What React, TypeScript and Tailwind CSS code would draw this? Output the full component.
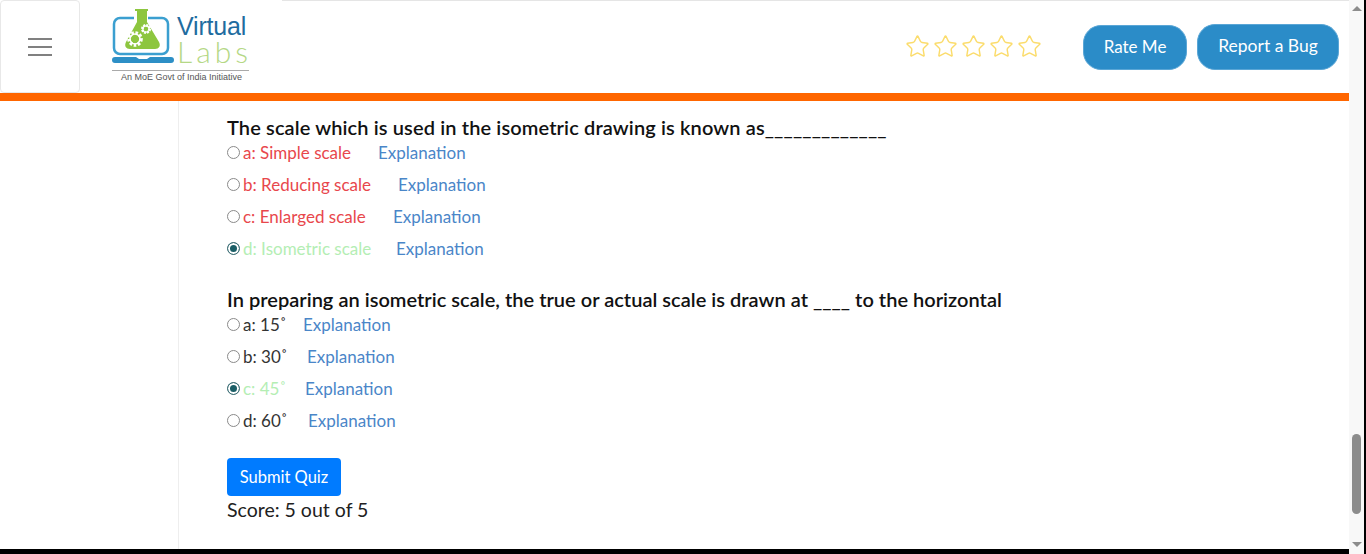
import { Star } from "lucide-react";

const FONT = "font-['Lato','Liberation_Sans',sans-serif]";

const QUESTIONS = [
  {
    title: "The scale which is used in the isometric drawing is known as_____________",
    spacing: "tracking-[0.12px]",
    options: [
      { label: "a: Simple scale", tone: "text-[#e8474c]", width: "w-[111px]", radio: false },
      { label: "b: Reducing scale", tone: "text-[#e8474c]", width: "w-[131px]", radio: false },
      { label: "c: Enlarged scale", tone: "text-[#e8474c]", width: "w-[126px]", radio: false },
      { label: "d: Isometric scale", tone: "text-[#b4eeb4]", width: "w-[129px]", radio: true },
    ],
  },
  {
    title: "In preparing an isometric scale, the true or actual scale is drawn at ____ to the horizontal",
    spacing: "tracking-[0.02px]",
    options: [
      { label: "a: 15˚", tone: "text-[#333333]", width: "w-[36px]", radio: false },
      { label: "b: 30˚", tone: "text-[#333333]", width: "w-[40px]", radio: false },
      { label: "c: 45˚", tone: "text-[#b4eeb4]", width: "w-[38px]", radio: true },
      { label: "d: 60˚", tone: "text-[#333333]", width: "w-[41px]", radio: false },
    ],
  },
];

function Logo() {
  return (
    <div className="relative w-[140px] h-[84px]">
      <svg width="66" height="58" viewBox="0 0 66 58" className="absolute left-0 top-[7px]">
        <path d="M22 10H8a6 6 0 0 0-6 6V40a6 6 0 0 0 6 6H50a6 6 0 0 0 6-6V16a6 6 0 0 0-6-6H36" fill="none" stroke="#3b9fd0" strokeWidth="2.5" />
        <path d="M23 1H36V3H35V14L47 34C49 38 47 41 43 41H18C14 41 12 38 14 34L25 14V3H23z" fill="#8dc63f" />
        <circle cx="23" cy="31" r="6" fill="none" stroke="#fff" strokeWidth="3.6" strokeDasharray="2.4 1.6" />
        <circle cx="23" cy="31" r="5" fill="none" stroke="#fff" strokeWidth="1.6" />
        <circle cx="34" cy="21" r="3.6" fill="none" stroke="#fff" strokeWidth="2.8" strokeDasharray="1.8 1" />
        <circle cx="34" cy="21" r="3.2" fill="none" stroke="#fff" strokeWidth="1.2" />
        <path d="M3 49H24L27 51H35L38 49H59a3 3 0 0 1 0 6H3a3 3 0 0 1 0-6z" fill="#2d8fc6" />
      </svg>
      <span className="absolute left-[65px] top-[14px] text-[25px] leading-[22px] text-[#1f6c9f] font-['Liberation_Sans',sans-serif] tracking-[-0.2px]">Virtual</span>
      <span className="absolute left-[65px] top-[36px] text-[30px] leading-[28px] font-light text-[#b5d886] font-['Lato',sans-serif] tracking-[4px]">Labs</span>
      <div className="absolute left-0 top-[69px] w-[137px] h-px bg-[#aaaaaa]" />
      <span className="absolute left-[9px] top-[71px] text-[9px] leading-[11px] text-[#555555] font-['Liberation_Sans',sans-serif] whitespace-nowrap">An MoE Govt of India Initiative</span>
    </div>
  );
}

function Header() {
  return (
    <header className="h-[93px] flex items-stretch bg-white shrink-0">
      <div className="w-[80px] border border-[#e8e8e8] rounded-[4px] flex flex-col items-center justify-center gap-[6px]">
        <span className="w-[24px] h-[2px] bg-[#808080]" />
        <span className="w-[24px] h-[2px] bg-[#808080]" />
        <span className="w-[24px] h-[2px] bg-[#808080]" />
      </div>
      <div className="w-[202px] pl-[32px] pt-[1px]">
        <Logo />
      </div>
      <div className="flex-1 flex items-center justify-end border-t border-[#e5e5e5] pr-[10px] pb-[1px]">
        <div className="flex items-center gap-[3px] mr-[41px]">
          {[0, 1, 2, 3, 4].map((i) => (
            <Star key={i} size={25} strokeWidth={1.4} className="text-[#fbdc6c]" />
          ))}
        </div>
        <button className="w-[104px] h-[45px] mt-[2px] pb-[2px] rounded-[18px] bg-[#2b8cc8] border border-[#5aa6d6] text-white text-[17px]">Rate Me</button>
        <button className="w-[142px] h-[46px] ml-[10px] rounded-[18px] bg-[#2b8cc8] border border-[#5aa6d6] text-white text-[17.5px]">Report a Bug</button>
      </div>
    </header>
  );
}

function Scrollbar() {
  return (
    <div className="w-[15px] shrink-0 bg-[#f8f8f8] flex flex-col items-center pt-[6px] pb-[7px]">
      <div className="w-0 h-0 border-l-[5px] border-r-[5px] border-b-[5px] border-l-transparent border-r-transparent border-b-[#8c8c8c]" />
      <div className="w-[9px] h-[80px] mt-[423px] rounded-full bg-[#8c8c8c]" />
      <div className="w-0 h-0 mt-auto border-l-[5px] border-r-[5px] border-t-[5px] border-l-transparent border-r-transparent border-t-[#8c8c8c]" />
    </div>
  );
}

export default function App() {
  return (
    <div className={`w-[1366px] h-[554px] overflow-hidden flex bg-black pr-[2px] ${FONT}`}>
      <div className="w-[1349px] h-[549px] flex flex-col bg-white">
        <Header />
        <div className="h-[8px] bg-[#ff6600] shrink-0" />
        <main className="flex-1 ml-[178px] border-l border-[#eeeeee] pl-[48px] pt-[15px]">
          {QUESTIONS.map((q, i) => (
            <section key={q.title} className={i === 0 ? "mb-[23px]" : "mb-[20px]"}>
              <h3 className={`text-[20px] leading-[22px] font-semibold text-[#111111] ${q.spacing}`}>{q.title}</h3>
              <div className="flex flex-col -mt-[1px]">
                {q.options.map((o) => (
                  <div key={o.label} className="h-[32px] flex items-center text-[17px]">
                    <input
                      type="radio"
                      readOnly
                      checked={o.radio}
                      className="appearance-none shrink-0 w-[13px] h-[13px] rounded-full bg-white border border-[#8a8a8a] m-0 -mt-[1px] checked:border-[#3f6f76] checked:bg-[#1b5e66] checked:shadow-[inset_0_0_0_2px_#ffffff]"
                    />
                    <span className={`ml-[3px] whitespace-nowrap ${o.width} ${o.tone}`}>{o.label}</span>
                    <span className="ml-[24px] text-[#4a86c8]">Explanation</span>
                  </div>
                ))}
              </div>
            </section>
          ))}
          <button className="w-[114px] h-[38px] mt-[1px] rounded-[4px] bg-[#007bff] text-white text-[16.5px]">Submit Quiz</button>
          <p className="mt-[1px] text-[19.5px] leading-[26px] text-[#212121]">Score: 5 out of 5</p>
        </main>
      </div>
      <Scrollbar />
    </div>
  );
}
